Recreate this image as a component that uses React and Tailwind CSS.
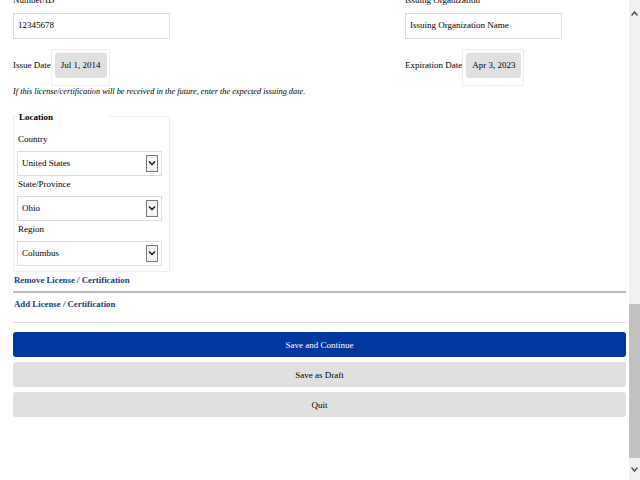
import React, { useLayoutEffect, useRef } from "react";

// Licenses / certifications step of an application form, scrolled to its end.

const NAVY = "text-[#1b3c7a]";

function TextField({ label, value }) {
  return (
    <div className="flex flex-col">
      <label className="leading-[12px] mb-[7px]">{label}</label>
      <div className="w-[157px] h-[26px] border border-[#dcdcdc] flex items-center px-[4px]">
        {value}
      </div>
    </div>
  );
}

function DateField({ label, value }) {
  return (
    <div className="flex items-start">
      <span className="mt-[4px] leading-[25px]">{label}</span>
      <div className="border border-[#eeeeee] pt-[3px] pl-[3px] pr-[2px] pb-[7px]">
        <div className="h-[25px] px-[6px] pt-[2px] flex items-center bg-[#e0e0e0] rounded-[3px]">
          {value}
        </div>
      </div>
    </div>
  );
}

function Select({ value }) {
  return (
    <div className="w-[145px] h-[25px] border border-[#dcdcdc] flex items-center justify-between pl-[4px] pr-[3px] ml-[-1px]">
      <span className="pt-[2px]">{value}</span>
      <span className="w-[12px] h-[17px] border border-[#7a7a7a] bg-[#f4f4f4] flex items-center justify-center">
        <svg width="8" height="6" viewBox="0 0 8 6">
          <path d="M1 1.5 L4 4.5 L7 1.5" fill="none" stroke="#111" strokeWidth="1.4" />
        </svg>
      </span>
    </div>
  );
}

function Scrollbar() {
  return (
    <div className="w-[11px] h-full bg-[#f1f1f1] flex flex-col items-center shrink-0">
      <div className="h-[26px] flex items-center justify-center">
        <svg width="7" height="5" viewBox="0 0 7 5">
          <path d="M0.5 4.5 L3.5 1 L6.5 4.5" fill="none" stroke="#505050" strokeWidth="1.5" />
        </svg>
      </div>
      <div className="flex-1 w-full flex flex-col justify-end">
        <div className="h-[154px] w-full bg-[#c1c1c1] mb-[1px]" />
      </div>
      <div className="h-[21px] flex items-center justify-center">
        <svg width="7" height="5" viewBox="0 0 7 5">
          <path d="M0.5 0.5 L3.5 4 L6.5 0.5" fill="none" stroke="#505050" strokeWidth="1.5" />
        </svg>
      </div>
    </div>
  );
}

export default function App() {
  const scroller = useRef(null);

  useLayoutEffect(() => {
    if (scroller.current) scroller.current.scrollTop = scroller.current.scrollHeight;
  }, []);

  return (
    <div className="flex h-screen bg-white text-black text-[9px] font-['Liberation_Serif','Times_New_Roman',serif]">
      <div ref={scroller} className="flex-1 overflow-hidden">
        <div className="pl-[13px] pr-[3px] pb-[63px]">
          {/* earlier part of the form, above the fold */}
          <div className="pt-[20px] pb-[700px]">
            <h1 className="text-[18px] font-bold text-[#1b3c7a] mb-[10px]">Licenses and Certifications</h1>
            <p className="mb-[20px]">List any professional licenses or certifications you currently hold.</p>
            <div className="grid grid-cols-[392px_1fr] mb-[12px]">
              <TextField label="License / Certification Name" value="Professional Engineer" />
              <TextField label="Type" value="License" />
            </div>
          </div>

          <div className="grid grid-cols-[392px_1fr]">
            <TextField label="Number/ID" value="12345678" />
            <TextField label="Issuing Organization" value="Issuing Organization Name" />
          </div>

          <div className="grid grid-cols-[392px_1fr] mt-[10px]">
            <DateField label="Issue Date" value="Jul 1, 2014" />
            <DateField label="Expiration Date" value="Apr 3, 2023" />
          </div>

          <p className="italic text-[8.3px] leading-[10px] mt-[1px]">
            If this license/certification will be received in the future, enter the expected issuing date.
          </p>

          <fieldset className="w-[157px] border border-[#eeeeee] mt-[14px] pl-[4px] pr-[7px] pb-[5px]">
            <legend className="w-[90px] pl-[1px] font-bold leading-[12px]">Location</legend>
            <label className="block leading-[12px] mt-[10px] mb-[6px]">Country</label>
            <Select value="United States" />
            <label className="block leading-[12px] mt-[2px] mb-[6px]">State/Province</label>
            <Select value="Ohio" />
            <label className="block leading-[12px] mt-[2px] mb-[6px]">Region</label>
            <Select value="Columbus" />
          </fieldset>

          <a href="#" className={`block font-bold text-[8.8px] leading-[12px] mt-[2px] ml-[1px] ${NAVY}`}>
            Remove License / Certification
          </a>
          <hr className="border-0 h-[2px] bg-[#bdbdbd] mt-[5px]" />
          <a href="#" className={`block font-bold text-[8.8px] leading-[12px] mt-[5px] ml-[1px] ${NAVY}`}>
            Add License / Certification
          </a>
          <hr className="border-0 h-[1px] bg-[#dddddd] mt-[12px]" />

          <div className="flex flex-col gap-[5px] mt-[9px]">
            <button className="h-[25px] pt-[4px] rounded-[3px] bg-[#0038a0] text-white">Save and Continue</button>
            <button className="h-[25px] pt-[4px] rounded-[3px] bg-[#e0e0e0]">Save as Draft</button>
            <button className="h-[25px] pt-[4px] rounded-[3px] bg-[#e0e0e0]">Quit</button>
          </div>
        </div>
      </div>
      <Scrollbar />
    </div>
  );
}
